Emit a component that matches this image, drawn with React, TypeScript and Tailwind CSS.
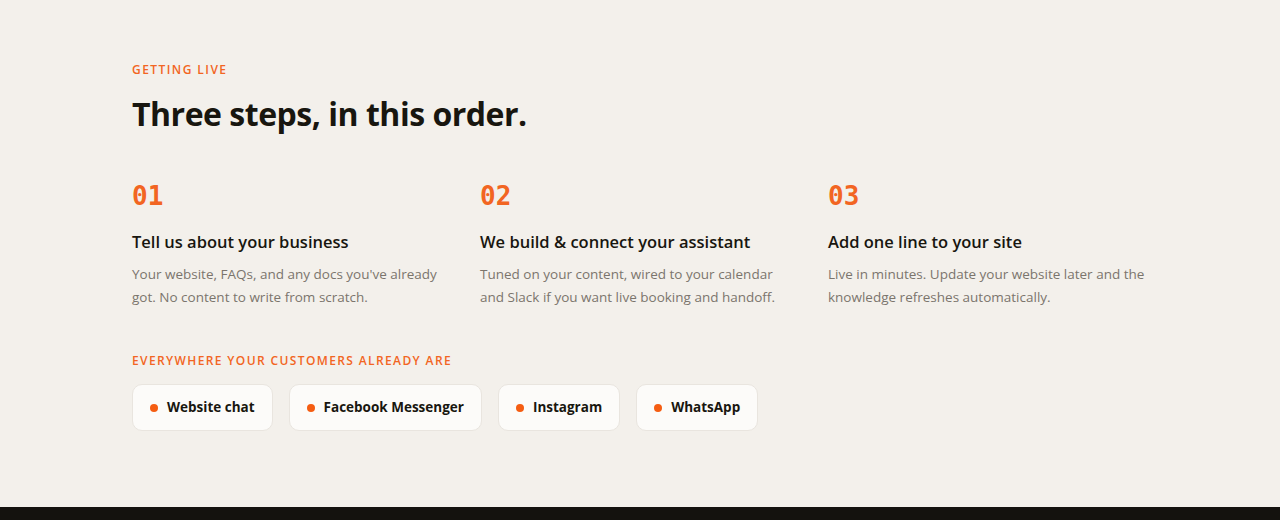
const steps = [
  {
    n: '01',
    title: 'Tell us about your business',
    body: "Your website, FAQs, and any docs you've already got. No content to write from scratch.",
  },
  {
    n: '02',
    title: 'We build & connect your assistant',
    body: 'Tuned on your content, wired to your calendar and Slack if you want live booking and handoff.',
  },
  {
    n: '03',
    title: 'Add one line to your site',
    body: 'Live in minutes. Update your website later and the knowledge refreshes automatically.',
  },
];

const channels = ['Website chat', 'Facebook Messenger', 'Instagram', 'WhatsApp'];

export default function App() {
  return (
    <div className="min-h-[520px] flex flex-col bg-[#f3f0eb] font-['Open_Sans','Noto_Sans',sans-serif]">
      <section className="flex-1 h-[507px]">
        <div className="max-w-[1080px] mx-auto px-8 pt-[62px]">
          <p className="text-[12px] font-semibold tracking-[0.12em] text-[#f26522] leading-4">GETTING LIVE</p>
          <h2 className="mt-[16px] text-[32px] leading-[40px] font-bold tracking-[-0.015em] text-[#18160f]">
            Three steps, in this order.
          </h2>

          <div className="mt-[46px] grid grid-cols-3 gap-7">
            {steps.map((s) => (
              <div key={s.n}>
                <div className="font-['DejaVu_Sans_Mono',monospace] text-[26px] font-bold leading-8 text-[#f26522]">
                  {s.n}
                </div>
                <h3 className="mt-[18px] text-[16.5px] font-semibold leading-6 text-[#18160f]">{s.title}</h3>
                <p className="mt-[9px] text-[13.5px] leading-[23px] text-[#7b756d]">{s.body}</p>
              </div>
            ))}
          </div>

          <p className="mt-[44px] text-[12px] font-semibold tracking-[0.115em] text-[#f26522] leading-4">
            EVERYWHERE YOUR CUSTOMERS ALREADY ARE
          </p>
          <ul className="mt-[15px] flex gap-4">
            {channels.map((c) => (
              <li
                key={c}
                className="h-[47px] flex items-center gap-[9px] px-[17px] rounded-[10px] border border-[#e9e5df] bg-[#fcfbf9] text-[13.5px] font-bold text-[#18160f]"
              >
                <span className="w-2 h-2 rounded-full bg-[#f55d12]" />
                {c}
              </li>
            ))}
          </ul>
        </div>
      </section>
      <footer className="h-[13px] bg-[#14120e]" />
    </div>
  );
}
